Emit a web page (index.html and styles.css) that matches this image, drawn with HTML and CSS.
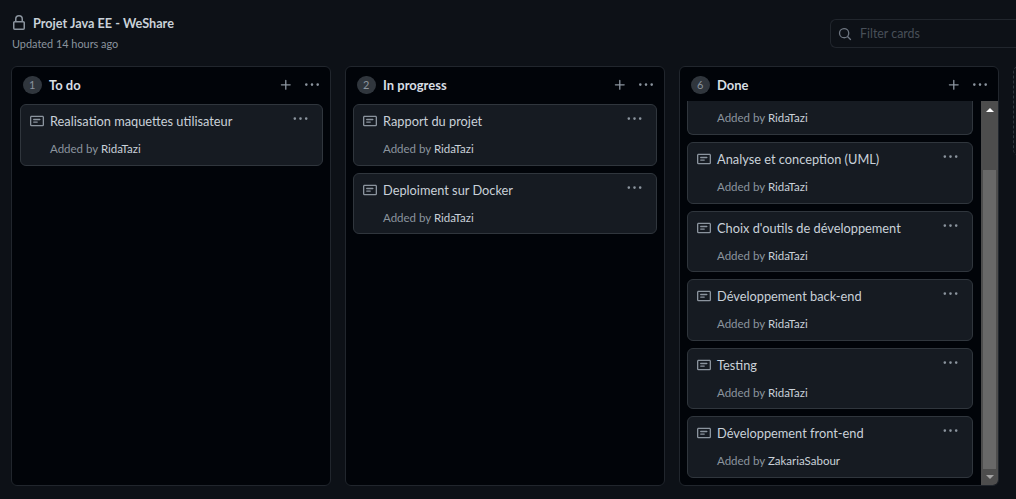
FILE: index.html
```html
<!DOCTYPE html>
<html lang="en">
<head>
    <meta charset="UTF-8">
    <meta name="viewport" content="width=device-width, initial-scale=1.0">
    <title>Projet Java EE - WeShare</title>
    <link rel="stylesheet" href="styles.css">
</head>
<body>

<svg class="icon-defs" aria-hidden="true">
    <symbol id="i-lock" viewBox="0 0 16 16"><path d="M4 4a4 4 0 0 1 8 0v2h.25c.966 0 1.75.784 1.75 1.75v5.5A1.75 1.75 0 0 1 12.25 15h-8.5A1.75 1.75 0 0 1 2 13.25v-5.5C2 6.784 2.784 6 3.75 6H4Zm8.25 3.5h-8.5a.25.25 0 0 0-.25.25v5.5c0 .138.112.25.25.25h8.5a.25.25 0 0 0 .25-.25v-5.5a.25.25 0 0 0-.25-.25ZM10.5 6V4a2.5 2.5 0 1 0-5 0v2Z"/></symbol>
    <symbol id="i-search" viewBox="0 0 16 16"><path d="M10.68 11.74a6 6 0 0 1-7.922-8.982 6 6 0 0 1 8.982 7.922l3.04 3.04a.749.749 0 0 1-.326 1.275.749.749 0 0 1-.734-.215ZM11.5 7a4.499 4.499 0 1 0-8.997 0A4.499 4.499 0 0 0 11.5 7Z"/></symbol>
    <symbol id="i-plus" viewBox="0 0 16 16"><path d="M7.75 2a.75.75 0 0 1 .75.75V7h4.25a.75.75 0 0 1 0 1.5H8.5v4.25a.75.75 0 0 1-1.5 0V8.5H2.75a.75.75 0 0 1 0-1.5H7V2.75A.75.75 0 0 1 7.75 2Z"/></symbol>
    <symbol id="i-kebab" viewBox="0 0 16 16"><path d="M8 9a1.5 1.5 0 1 0 0-3 1.5 1.5 0 0 0 0 3ZM1.5 9a1.5 1.5 0 1 0 0-3 1.5 1.5 0 0 0 0 3Zm13 0a1.5 1.5 0 1 0 0-3 1.5 1.5 0 0 0 0 3Z"/></symbol>
    <symbol id="i-note" viewBox="0 0 16 16"><path d="M0 3.75C0 2.784.784 2 1.75 2h12.5c.966 0 1.75.784 1.75 1.75v8.5A1.75 1.75 0 0 1 14.25 14H1.75A1.75 1.75 0 0 1 0 12.25Zm1.75-.25a.25.25 0 0 0-.25.25v8.5c0 .138.112.25.25.25h12.5a.25.25 0 0 0 .25-.25v-8.5a.25.25 0 0 0-.25-.25ZM3.5 6.25a.75.75 0 0 1 .75-.75h7a.75.75 0 0 1 0 1.5h-7a.75.75 0 0 1-.75-.75Zm.75 2.25h4a.75.75 0 0 1 0 1.5h-4a.75.75 0 0 1 0-1.5Z"/></symbol>
</svg>

<header class="top">
    <div class="project">
        <h1 class="project-name">
            <svg class="lock"><use href="#i-lock"/></svg>
            Projet Java EE - WeShare
        </h1>
        <p class="updated">Updated 14 hours ago</p>
    </div>
    <div class="filter">
        <svg class="search"><use href="#i-search"/></svg>
        <span>Filter cards</span>
    </div>
</header>

<main class="board">

    <section class="column">
        <div class="column-head">
            <span class="count">1</span>
            <h2>To do</h2>
            <svg class="plus"><use href="#i-plus"/></svg>
            <svg class="kebab"><use href="#i-kebab"/></svg>
        </div>
        <div class="cards">
            <article class="card">
                <div class="card-title">
                    <svg class="note"><use href="#i-note"/></svg>
                    <span>Realisation maquettes utilisateur</span>
                    <svg class="card-menu"><use href="#i-kebab"/></svg>
                </div>
                <p class="added">Added by <b>RidaTazi</b></p>
            </article>
        </div>
    </section>

    <section class="column">
        <div class="column-head">
            <span class="count">2</span>
            <h2>In progress</h2>
            <svg class="plus"><use href="#i-plus"/></svg>
            <svg class="kebab"><use href="#i-kebab"/></svg>
        </div>
        <div class="cards">
            <article class="card">
                <div class="card-title">
                    <svg class="note"><use href="#i-note"/></svg>
                    <span>Rapport du projet</span>
                    <svg class="card-menu"><use href="#i-kebab"/></svg>
                </div>
                <p class="added">Added by <b>RidaTazi</b></p>
            </article>
            <article class="card">
                <div class="card-title">
                    <svg class="note"><use href="#i-note"/></svg>
                    <span>Deploiment sur Docker</span>
                    <svg class="card-menu"><use href="#i-kebab"/></svg>
                </div>
                <p class="added">Added by <b>RidaTazi</b></p>
            </article>
        </div>
    </section>

    <section class="column">
        <div class="column-head">
            <span class="count">6</span>
            <h2>Done</h2>
            <svg class="plus"><use href="#i-plus"/></svg>
            <svg class="kebab"><use href="#i-kebab"/></svg>
        </div>
        <div class="scroll-area">
            <div class="cards scrolled">
                <!-- only the bottom of this card is in view -->
                <article class="card card-cut">
                    <p class="added">Added by <b>RidaTazi</b></p>
                </article>
                <article class="card">
                    <div class="card-title">
                        <svg class="note"><use href="#i-note"/></svg>
                        <span>Analyse et conception (UML)</span>
                        <svg class="card-menu"><use href="#i-kebab"/></svg>
                    </div>
                    <p class="added">Added by <b>RidaTazi</b></p>
                </article>
                <article class="card">
                    <div class="card-title">
                        <svg class="note"><use href="#i-note"/></svg>
                        <span>Choix d'outils de développement</span>
                        <svg class="card-menu"><use href="#i-kebab"/></svg>
                    </div>
                    <p class="added">Added by <b>RidaTazi</b></p>
                </article>
                <article class="card">
                    <div class="card-title">
                        <svg class="note"><use href="#i-note"/></svg>
                        <span>Développement back-end</span>
                        <svg class="card-menu"><use href="#i-kebab"/></svg>
                    </div>
                    <p class="added">Added by <b>RidaTazi</b></p>
                </article>
                <article class="card">
                    <div class="card-title">
                        <svg class="note"><use href="#i-note"/></svg>
                        <span>Testing</span>
                        <svg class="card-menu"><use href="#i-kebab"/></svg>
                    </div>
                    <p class="added">Added by <b>RidaTazi</b></p>
                </article>
                <article class="card">
                    <div class="card-title">
                        <svg class="note"><use href="#i-note"/></svg>
                        <span>Développement front-end</span>
                        <svg class="card-menu"><use href="#i-kebab"/></svg>
                    </div>
                    <p class="added">Added by <b>ZakariaSabour</b></p>
                </article>
            </div>
            <div class="scrollbar">
                <span class="arrow-up"></span>
                <span class="thumb"></span>
                <span class="arrow-down"></span>
            </div>
        </div>
    </section>

    <div class="add-column"></div>

</main>

</body>
</html>
```

FILE: styles.css
```css
/* General Reset */
body {
    margin: 0;
    height: 499px;
    overflow: hidden;
    font-family: Lato, Roboto, sans-serif;
    background-color: #0d1117;
    color: #c9d1d9;
}

svg {
    fill: currentColor;
    flex-shrink: 0;
}

.icon-defs {
    display: none;
}

/* Top bar */
.top {
    display: flex;
    justify-content: space-between;
    height: 66px;
    padding-left: 12px;
    box-sizing: border-box;
    overflow: hidden;
}

.project {
    padding-top: 14px;
}

.project-name {
    display: flex;
    align-items: center;
    gap: 6px;
    margin: 0;
    font-size: 12.7px;
    line-height: 18px;
    font-weight: 700;
    color: #c9d1d9;
}

.lock {
    width: 16px;
    height: 16px;
    margin-left: -1px;
    color: #8b949e;
}

.updated {
    margin: 4px 0 0;
    font-size: 10.9px;
    line-height: 15px;
    color: #8b949e;
}

.filter {
    display: flex;
    align-items: center;
    gap: 8px;
    flex-shrink: 0;
    width: 186px;
    height: 29px;
    margin-top: 19px;
    padding-left: 7px;
    box-sizing: border-box;
    border: 1px solid #21262d;
    border-right: 0;
    border-radius: 6px 0 0 6px;
    font-size: 12.4px;
    color: #484f58;
}

.search {
    width: 14px;
    height: 14px;
    color: #6e7681;
}

/* Board */
.board {
    display: flex;
    gap: 14px;
    height: 420px;
    padding-left: 11px;
    overflow: hidden;
}

.column {
    display: flex;
    flex-direction: column;
    flex-shrink: 0;
    width: 320px;
    box-sizing: border-box;
    border: 1px solid #21262d;
    border-radius: 6px;
    background-color: #010409;
    overflow: hidden;
}

.column-head {
    display: flex;
    align-items: center;
    flex-shrink: 0;
    height: 34px;
    padding: 2px 11px 0 11px;
    box-sizing: border-box;
}

.column-head h2 {
    flex: 1;
    margin: 0 0 0 7.5px;
    font-size: 13px;
    font-weight: 700;
    color: #d8dee4;
}

.count {
    width: 18.5px;
    height: 18.5px;
    border-radius: 50%;
    background-color: #30363d;
    color: #8b949e;
    font-size: 11px;
    line-height: 18.5px;
    text-align: center;
}

.plus {
    width: 14px;
    height: 14px;
    margin-right: 12px;
    color: #8b949e;
}

.kebab {
    width: 14px;
    height: 14px;
    color: #8b949e;
}

/* Cards */
.cards {
    display: flex;
    flex-direction: column;
    gap: 7px;
    padding: 3px 7px 0 7px;
}

.column:first-child .cards {
    padding-left: 8px;
}

.card {
    flex-shrink: 0;
    height: 61.6px;
    padding: 7px 14px 0 9px;
    box-sizing: border-box;
    border: 1px solid #30363d;
    border-radius: 6px;
    background-color: #161b22;
}

.card-title {
    display: flex;
    align-items: center;
    gap: 6px;
    font-size: 12.8px;
    line-height: 18px;
    color: #c9d1d9;
}

.card-title span {
    flex: 1;
}

.note {
    width: 14px;
    height: 14px;
    color: #8b949e;
}

.card-menu {
    width: 15px;
    height: 14px;
    margin-top: -4px;
    color: #8b949e;
}

.added {
    margin: 11px 0 0 20px;
    font-size: 11.5px;
    line-height: 15px;
    color: #8b949e;
}

.added b {
    font-weight: 400;
    color: #c9d1d9;
}

/* Done column, scrolled list */
.scroll-area {
    display: flex;
    flex: 1;
    min-height: 0;
}

.cards.scrolled {
    flex: 1;
    min-width: 0;
    overflow: hidden;
    padding: 0 8px 0 7px;
}

.card-cut {
    height: 34px;
    padding-top: 9px;
    border-top: 0;
    border-radius: 0 0 6px 6px;
}

.card-cut .added {
    margin-top: 0;
}

.scrollbar {
    display: flex;
    flex-direction: column;
    align-items: center;
    flex-shrink: 0;
    width: 17px;
    background-color: #4d4d4d;
}

.thumb {
    flex: 1;
    width: 13px;
    margin-top: 58px;
    background-color: #686868;
}

.arrow-up,
.arrow-down {
    width: 0;
    height: 0;
    border-left: 4px solid transparent;
    border-right: 4px solid transparent;
}

.arrow-up {
    margin-top: 7px;
    border-bottom: 4px solid #ffffff;
}

.arrow-down {
    margin: 6px 0 6px;
    border-top: 4px solid #a3a3a3;
}

.add-column {
    flex-shrink: 0;
    width: 320px;
    box-sizing: border-box;
    border: 1px dashed #30363d;
    border-radius: 6px;
    height: 90px;
}
```
